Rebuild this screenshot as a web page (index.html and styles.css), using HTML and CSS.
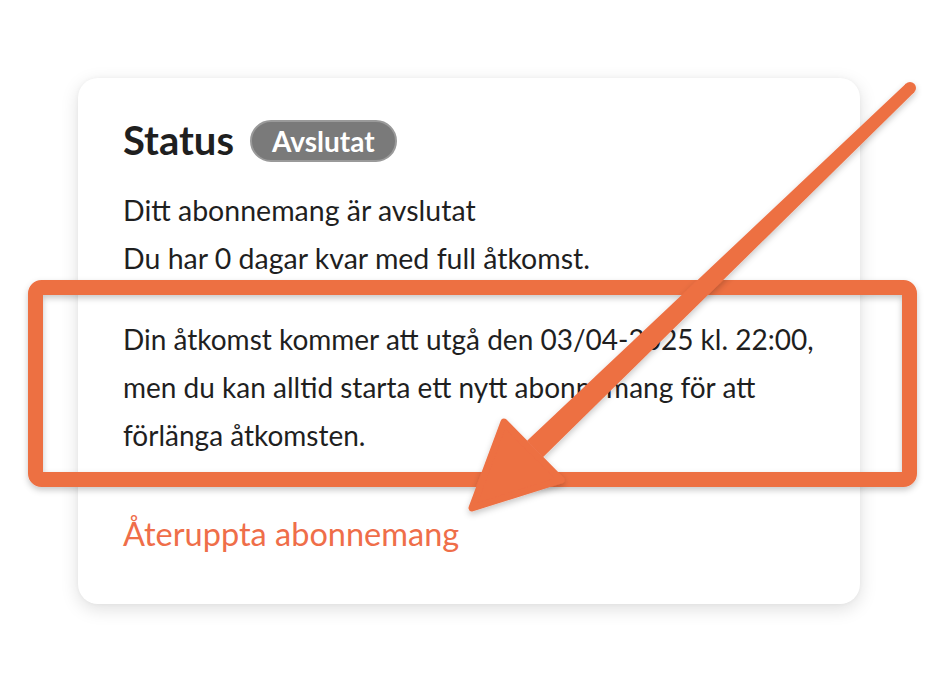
FILE: index.html
```html
<!DOCTYPE html>
<html lang="sv">
<head>
<meta charset="utf-8">
<title>Status</title>
<link rel="stylesheet" href="styles.css">
</head>
<body>
<div class="page">
  <section class="card">
    <div class="title-row">
      <h2 class="title">Status</h2>
      <span class="badge">Avslutat</span>
    </div>
    <p class="line first">Ditt abonnemang är avslutat</p>
    <p class="line">Du har 0 dagar kvar med full åtkomst.</p>
    <p class="para">Din åtkomst kommer att utgå den 03/04-2025 kl. 22:00, men du kan alltid starta ett nytt abonnemang för att förlänga åtkomsten.</p>
    <a class="link" href="#">Återuppta abonnemang</a>
  </section>
</div>
<svg class="annot" width="938" height="682" viewBox="0 0 938 682" xmlns="http://www.w3.org/2000/svg">
  <defs>
    <filter id="sh" x="-10%" y="-10%" width="120%" height="130%">
      <feDropShadow dx="0" dy="3" stdDeviation="3" flood-color="#000" flood-opacity="0.22"/>
    </filter>
  </defs>
  <g filter="url(#sh)">
    <rect x="35.5" y="287.5" width="874" height="192" rx="6" ry="6" fill="none" stroke="#ed6f43" stroke-width="15"/>
  </g>
  <g filter="url(#sh)" fill="#ed6f43">
    <circle cx="910" cy="88" r="6"/>
    <polygon points="914.2,92.3 905.8,83.7 527.1,440.8 542.9,457.2"/>
    <polygon points="472,508 504,422 561,480" stroke="#ed6f43" stroke-width="7" stroke-linejoin="round"/>
  </g>
</svg>
</body>
</html>
```

FILE: styles.css
```css
html, body {
  margin: 0;
  padding: 0;
  background: #ffffff;
}

body {
  width: 938px;
  height: 682px;
  overflow: hidden;
  position: relative;
  font-family: Lato, "Open Sans", sans-serif;
  color: #1f1f1f;
}

.page {
  padding: 78px 78px 0 78px;
}

.card {
  width: 782px;
  height: 526px;
  box-sizing: border-box;
  background: #ffffff;
  border-radius: 20px;
  box-shadow: 0 5px 18px rgba(0, 0, 0, 0.13), 0 0 4px rgba(0, 0, 0, 0.04);
  padding: 38px 20px 0 45px;
}

.title-row {
  display: flex;
  align-items: center;
  gap: 16px;
  height: 48px;
}

.title {
  margin: 0;
  font-size: 40px;
  line-height: 48px;
  font-weight: 700;
  color: #1f1f1f;
}

.badge {
  display: inline-flex;
  align-items: center;
  height: 42px;
  padding: 0 20px;
  border-radius: 21px;
  background: #7a7a7a;
  border: 2px solid #9a9a9a;
  color: #ffffff;
  font-size: 28px;
  font-weight: 700;
  box-sizing: border-box;
  margin-top: 2px;
}

.line {
  margin: 0;
  font-size: 28.5px;
  line-height: 48px;
}

.line.first {
  margin-top: 22px;
}

.para {
  margin: 33px 0 0 0;
  font-size: 28px;
  line-height: 48px;
  max-width: 712px;
}

.link {
  display: block;
  margin-top: 51px;
  font-size: 32.5px;
  line-height: 48px;
  color: #ef6e49;
  text-decoration: none;
}

.annot {
  position: absolute;
  left: 0;
  top: 0;
  pointer-events: none;
}
```
